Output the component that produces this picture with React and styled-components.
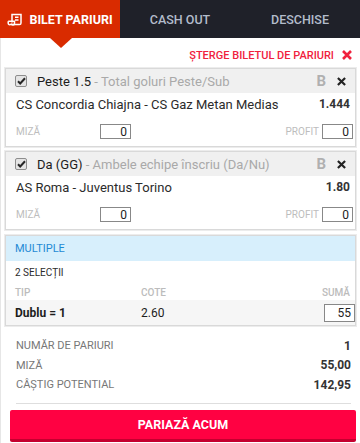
import React from "react";
import styled, { createGlobalStyle } from "styled-components";

const Global = createGlobalStyle`
  * { box-sizing: border-box; }
  html, body { margin: 0; padding: 0; background: #fff; }
  body { font-family: Roboto, "Liberation Sans", Arial, sans-serif; width: 360px; height: 443px; overflow: hidden; }
`;

const Page = styled.div`
  width: 360px;
  height: 443px;
  background: #fff;
  border-left: 1px solid #e6e6e6;
  display: flex;
  flex-direction: column;
`;

const Tabs = styled.div`
  display: grid;
  grid-template-columns: 120px 120px 1fr;
  height: 38px;
  background: #1f2129;
  margin-left: -1px;
`;

const Tab = styled.div`
  position: relative;
  display: flex;
  align-items: center;
  justify-content: center;
  gap: 6px;
  font-size: 12.5px;
  font-weight: ${(p) => (p.$active ? 700 : 500)};
  color: ${(p) => (p.$active ? "#fff" : "#b3bccb")};
  background: ${(p) => (p.$active ? "#d92b00" : "transparent")};
  padding-left: ${(p) => p.$pl || 0}px;
  ${(p) =>
    p.$active &&
    `&:after{content:"";position:absolute;left:50px;top:38px;border-left:11px solid transparent;border-right:11px solid transparent;border-top:10px solid #d92b00;}`}
`;

const Body = styled.div`
  padding: 0 4px 0 4px;
  display: flex;
  flex-direction: column;
`;

const ClearRow = styled.div`
  height: 30px;
  display: flex;
  align-items: center;
  justify-content: flex-end;
  gap: 8px;
  padding: 4px 4px 0 0;
  font-size: 11px;
  font-weight: 500;
  color: #f0213d;
`;

const Card = styled.div`
  border: 1px solid #d9d9d9;
  box-shadow: 0 0 0 1px #ececec;
  background: #fff;
  margin-bottom: ${(p) => p.$mb || 0}px;
`;

const CardHead = styled.div`
  height: 24px;
  background: #f0f0f0;
  display: flex;
  align-items: center;
  padding: 0 9px 0 9px;
  font-size: 13px;
`;

const Check = styled.span`
  width: 12px;
  height: 12px;
  border: 1px solid #8d8d8d;
  border-radius: 2px;
  background: #e4e4e4;
  display: inline-flex;
  align-items: center;
  justify-content: center;
  margin-right: 10px;
  flex: none;
`;

const Pick = styled.span`
  color: #1d1d1d;
  white-space: nowrap;
`;

const Market = styled.span`
  color: #a9a9a9;
  white-space: nowrap;
`;

const HeadIcons = styled.div`
  margin-left: auto;
  display: flex;
  align-items: center;
  gap: 11px;
`;

const BIcon = styled.span`
  font-size: 15px;
  font-weight: 700;
  color: #b0b0b0;
`;

const MatchRow = styled.div`
  height: 22px;
  display: flex;
  align-items: center;
  justify-content: space-between;
  padding: 0 5px 0 10px;
  font-size: 13px;
  color: #2b2b2b;
`;

const Odd = styled.span`
  font-weight: 700;
  font-size: 12px;
  color: #333;
`;

const StakeRow = styled.div`
  height: 31px;
  display: flex;
  align-items: center;
  padding: 2px 2px 0 10px;
`;

const Label = styled.span`
  font-size: 10px;
  color: #bdbdbd;
  text-transform: uppercase;
  width: ${(p) => p.$w || "auto"};
  margin-left: ${(p) => p.$ml || "0"};
  margin-right: ${(p) => p.$mr || "0"};
`;

const Box = styled.div`
  width: 31px;
  height: 15px;
  border: 1px solid #888;
  font-size: 12px;
  color: #222;
  display: flex;
  align-items: center;
  justify-content: flex-end;
  padding-right: 3px;
  background: #fff;
`;

const Multi = styled.div`
  border: 1px solid #d9d9d9;
  box-shadow: 0 0 0 1px #ececec;
  margin-top: 5px;
`;

const MultiHead = styled.div`
  height: 25px;
  background: #d7effc;
  color: #1f8ad4;
  font-size: 11px;
  display: flex;
  align-items: center;
  padding-left: 9px;
`;

const Selections = styled.div`
  height: 23px;
  font-size: 10px;
  color: #2b2b2b;
  display: flex;
  align-items: center;
  padding-left: 9px;
`;

const Grid = styled.div`
  display: grid;
  grid-template-columns: 126px 1fr auto;
  align-items: center;
  padding: 0 0 0 9px;
  height: ${(p) => p.$h}px;
  background: ${(p) => p.$bg || "transparent"};
`;

const ColHead = styled.span`
  font-size: 10px;
  font-weight: 500;
  color: #bcbcbc;
  text-align: ${(p) => (p.$right ? "right" : "left")};
  padding-right: ${(p) => (p.$right ? "5px" : "0")};
`;

const Cell = styled.span`
  font-size: 12px;
  font-weight: ${(p) => (p.$bold ? 700 : 400)};
  color: #1d1d1d;
`;

const SumBox = styled(Box)`
  height: 18px;
  width: 31px;
`;

const Summary = styled.div`
  display: flex;
  flex-direction: column;
  padding: 10px 5px 0 11px;
`;

const SumRow = styled.div`
  height: 19.5px;
  display: flex;
  align-items: center;
  justify-content: space-between;
  font-size: 11px;
`;

const SumLabel = styled.span`
  color: #777;
`;

const SumVal = styled.span`
  color: #333;
  font-weight: 700;
  font-size: 12px;
`;

const Sep = styled.div`
  height: 1px;
  background: #dedede;
  margin: 8px 0 6px 0;
`;

const Button = styled.div`
  height: 32px;
  margin: 0 0 0 5px;
  width: 346px;
  background: #ff0142;
  border-bottom: 3px solid #c4002f;
  border-radius: 2px;
  color: #fff;
  font-weight: 700;
  font-size: 12.5px;
  display: flex;
  align-items: center;
  justify-content: center;
`;

const TicketIcon = () => (
  <svg width="16" height="13" viewBox="0 0 16 13">
    <path d="M5 9.5V1.5h9v8.5a1.6 1.6 0 0 1-1.6 1.6H3" fill="none" stroke="#fff" strokeWidth="1.5" />
    <path d="M1.2 8.2h6.3v2.2a1.5 1.5 0 0 1-3 0" fill="none" stroke="#fff" strokeWidth="1.5" />
    <path d="M1.2 8.2v2.1a1.4 1.4 0 0 0 1.8 1.3" fill="none" stroke="#fff" strokeWidth="1.5" />
    <path d="M8 4.2h3.5M8 7h3.5" stroke="#fff" strokeWidth="1.5" />
  </svg>
);

const CheckMark = () => (
  <svg width="9" height="8" viewBox="0 0 9 8">
    <path d="M1 4.3l2.2 2.2L8 1.3" fill="none" stroke="#262626" strokeWidth="2" />
  </svg>
);

const Cross = ({ color, size = 10, w = 2.4 }) => (
  <svg width={size} height={size} viewBox="0 0 10 10">
    <path d="M1 1l8 8M9 1l-8 8" stroke={color} strokeWidth={w} />
  </svg>
);

const bets = [
  { pick: "Peste 1.5", market: "Total goluri Peste/Sub", match: "CS Concordia Chiajna - CS Gaz Metan Medias", odd: "1.444" },
  { pick: "Da (GG)", market: "Ambele echipe înscriu (Da/Nu)", match: "AS Roma - Juventus Torino", odd: "1.80" },
];

export default function App() {
  return (
    <>
      <Global />
      <Page>
        <Tabs>
          <Tab $active>
            <TicketIcon />
            BILET PARIURI
          </Tab>
          <Tab>CASH OUT</Tab>
          <Tab>DESCHISE</Tab>
        </Tabs>
        <Body>
          <ClearRow>
            ȘTERGE BILETUL DE PARIURI
            <Cross color="#f0213d" size={10} w={2.6} />
          </ClearRow>
          {bets.map((b, i) => (
            <Card key={i} $mb={i === 0 ? 4 : 0}>
              <CardHead>
                <Check>
                  <CheckMark />
                </Check>
                <Pick>{b.pick}</Pick>
                <Market>&nbsp;- {b.market}</Market>
                <HeadIcons>
                  <BIcon>B</BIcon>
                  <Cross color="#222" size={9} w={2.4} />
                </HeadIcons>
              </CardHead>
              <MatchRow>
                <span>{b.match}</span>
                <Odd>{b.odd}</Odd>
              </MatchRow>
              <StakeRow>
                <Label $w="84px">Miză</Label>
                <Box>0</Box>
                <Label $ml="auto" $mr="3px">Profit</Label>
                <Box>0</Box>
              </StakeRow>
            </Card>
          ))}
          <Multi>
            <MultiHead>MULTIPLE</MultiHead>
            <Selections>2 SELECȚII</Selections>
            <Grid $h={16}>
              <ColHead>TIP</ColHead>
              <ColHead>COTE</ColHead>
              <ColHead $right>SUMĂ</ColHead>
            </Grid>
            <Grid $h={25} $bg="#f6f6f6">
              <Cell $bold>Dublu = 1</Cell>
              <Cell>2.60</Cell>
              <SumBox>55</SumBox>
            </Grid>
          </Multi>
          <Summary>
            <SumRow>
              <SumLabel>NUMĂR DE PARIURI</SumLabel>
              <SumVal>1</SumVal>
            </SumRow>
            <SumRow>
              <SumLabel>MIZĂ</SumLabel>
              <SumVal>55,00</SumVal>
            </SumRow>
            <SumRow>
              <SumLabel>CÂȘTIG POTENTIAL</SumLabel>
              <SumVal>142,95</SumVal>
            </SumRow>
            <Sep />
          </Summary>
          <Button>PARIAZĂ ACUM</Button>
        </Body>
      </Page>
    </>
  );
}
